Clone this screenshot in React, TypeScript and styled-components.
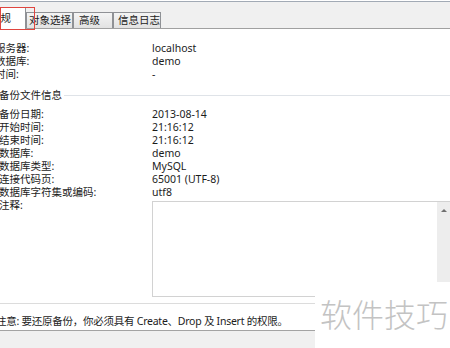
import React from 'react';
import styled, { createGlobalStyle } from 'styled-components';

const GlobalStyle = createGlobalStyle`
  html, body {
    margin: 0;
    padding: 0;
    background: #ffffff;
  }
  #root {
    width: 450px;
    height: 348px;
    overflow: hidden;
  }
`;

const Frame = styled.div`
  position: relative;
  width: 450px;
  height: 348px;
  overflow: hidden;
  display: flex;
  flex-direction: column;
  background: #ffffff;
  font-family: "Noto Sans", "Noto Sans CJK SC", sans-serif;
  font-size: 10.5px;
  color: #1c1c1c;
`;

const TabStrip = styled.div`
  flex: none;
  height: 26px;
  margin-top: 1px;
  border-top: 1px solid #a2aab5;
  border-bottom: 1px solid #a0a0a0;
  background: #f0f0f0;
  display: flex;
  align-items: flex-end;
  padding-left: 0;
  margin-left: -14px;
`;

interface TabProps {
  $active?: boolean;
  $w: number;
  $pad: number;
}

const Tab = styled.div<TabProps>`
  position: relative;
  box-sizing: border-box;
  width: ${(p) => p.$w}px;
  height: ${(p) => (p.$active ? '22px' : '16px')};
  margin-bottom: ${(p) => (p.$active ? '-1px' : '0')};
  padding-left: ${(p) => p.$pad}px;
  border: 1px solid #8f9195;
  border-bottom: none;
  background: ${(p) => (p.$active ? '#ffffff' : 'linear-gradient(#f4f4f4, #e2e2e2)')};
  line-height: ${(p) => (p.$active ? '20px' : '15px')};
  white-space: nowrap;
  z-index: ${(p) => (p.$active ? 2 : 1)};
`;

const Annotation = styled.div`
  position: absolute;
  left: 0;
  top: 7px;
  width: 35px;
  height: 23px;
  box-sizing: border-box;
  border: 1px solid #e0453f;
  z-index: 5;
`;

const Body = styled.div`
  flex: none;
  margin-left: -5px;
  padding-top: 13px;
`;

interface GridProps {
  $label: number;
}

const InfoGrid = styled.div<GridProps>`
  display: grid;
  grid-template-columns: ${(p) => p.$label}px 1fr;
  line-height: 13px;
  white-space: nowrap;
`;

const GroupTitle = styled.div`
  display: flex;
  align-items: center;
  gap: 2px;
  margin: 8px 0 6px 4px;
  line-height: 13px;
  white-space: nowrap;

  &::after {
    content: '';
    flex: 1;
    height: 1px;
    background: #dfe3e8;
  }
`;

const Group = styled.div`
  padding-left: 4px;
`;

const NoteBox = styled.div`
  position: relative;
  box-sizing: border-box;
  height: 96px;
  margin: 2px -5px 0 0;
  border: 1px solid #d2d2d2;
  background: #ffffff;
  display: flex;
  justify-content: flex-end;
`;

const ScrollBar = styled.div`
  width: 17px;
  background: #ededed;
  position: relative;

  &::before {
    content: '';
    position: absolute;
    left: 4px;
    top: 7px;
    border-left: 3px solid transparent;
    border-right: 3px solid transparent;
    border-bottom: 3px solid #6f6f6f;
  }
`;

const Separator = styled.div`
  height: 1px;
  margin-top: 6px;
  background: #dcdcdc;
`;

const Notice = styled.div`
  margin-top: 11px;
  padding-left: 1px;
  line-height: 13px;
  letter-spacing: -0.25px;
  white-space: nowrap;
`;

const Footer = styled.div`
  flex: 1;
  margin-top: 2px;
  border-top: 1px solid #a3a3a3;
  background: #f0f0f0;
`;

const Watermark = styled.div`
  position: absolute;
  right: 0;
  bottom: 0;
  width: 135px;
  height: 66px;
  box-sizing: border-box;
  padding: 14px 0 0 5px;
  background: #ffffff;
  font-family: "Noto Sans CJK SC", sans-serif;
  font-weight: 300;
  font-size: 32px;
  line-height: 34px;
  color: #c3c3c3;
  white-space: nowrap;
  z-index: 4;
`;

const serverRows: [string, string][] = [
  ['服务器:', 'localhost'],
  ['数据库:', 'demo'],
  ['时间:', '-'],
];

const backupRows: [string, string][] = [
  ['备份日期:', '2013-08-14'],
  ['开始时间:', '21:16:12'],
  ['结束时间:', '21:16:12'],
  ['数据库:', 'demo'],
  ['数据库类型:', 'MySQL'],
  ['连接代码页:', '65001 (UTF-8)'],
  ['数据库字符集或编码:', 'utf8'],
];

export default function App() {
  return (
    <>
      <GlobalStyle />
      <Frame>
        <TabStrip>
          <Tab $active $w={40} $pad={3}>常规</Tab>
          <Tab $w={47} $pad={2}>对象选择</Tab>
          <Tab $w={40} $pad={5}>高级</Tab>
          <Tab $w={48} $pad={4}>信息日志</Tab>
        </TabStrip>
        <Annotation />
        <Body>
          <InfoGrid $label={157}>
            {serverRows.map(([k, v]) => (
              <React.Fragment key={k}>
                <span>{k}</span>
                <span>{v}</span>
              </React.Fragment>
            ))}
          </InfoGrid>
          <GroupTitle>备份文件信息</GroupTitle>
          <Group>
            <InfoGrid $label={153}>
              {backupRows.map(([k, v]) => (
                <React.Fragment key={k}>
                  <span>{k}</span>
                  <span>{v}</span>
                </React.Fragment>
              ))}
              <span>注释:</span>
              <NoteBox>
                <ScrollBar />
              </NoteBox>
            </InfoGrid>
          </Group>
          <Separator />
          <Notice>注意: 要还原备份，你必须具有 Create、Drop 及 Insert 的权限。</Notice>
        </Body>
        <Footer />
        <Watermark>软件技巧</Watermark>
      </Frame>
    </>
  );
}
